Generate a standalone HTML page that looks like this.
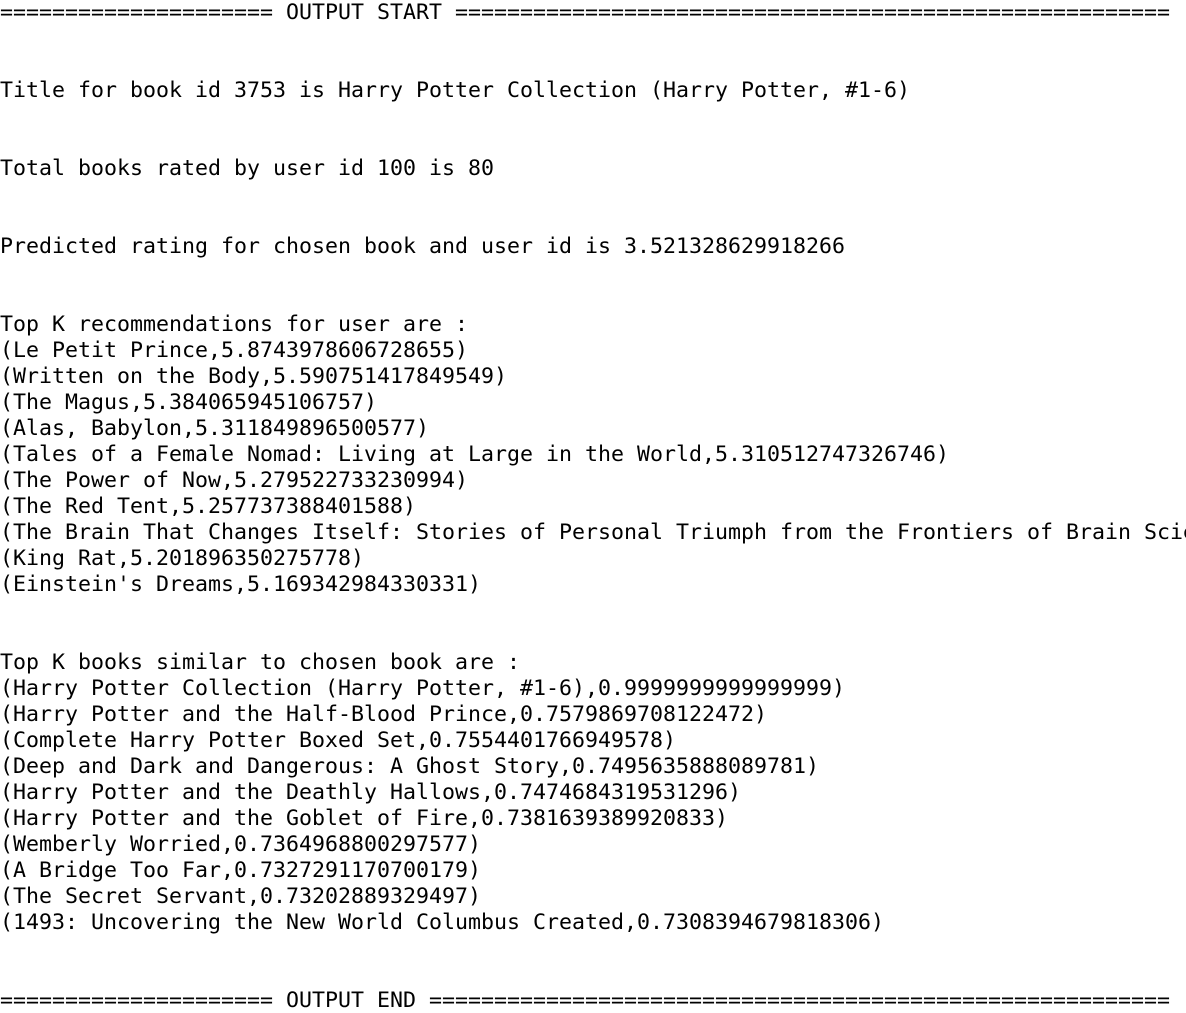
<!DOCTYPE html>
<html><head><meta charset="utf-8"><style>
html,body{margin:0;padding:0;background:#fff;width:1186px;height:1013px;overflow:hidden}
pre{margin:0;font-family:"DejaVu Sans Mono","Liberation Mono",monospace;font-size:21.6px;line-height:26px;color:#000;white-space:pre;overflow:hidden}
</style></head><body><pre>===================== OUTPUT START =======================================================


Title for book id 3753 is Harry Potter Collection (Harry Potter, #1-6)


Total books rated by user id 100 is 80


Predicted rating for chosen book and user id is 3.521328629918266


Top K recommendations for user are :
(Le Petit Prince,5.8743978606728655)
(Written on the Body,5.590751417849549)
(The Magus,5.384065945106757)
(Alas, Babylon,5.311849896500577)
(Tales of a Female Nomad: Living at Large in the World,5.310512747326746)
(The Power of Now,5.279522733230994)
(The Red Tent,5.257737388401588)
(The Brain That Changes Itself: Stories of Personal Triumph from the Frontiers of Brain Science,5.2)
(King Rat,5.201896350275778)
(Einstein's Dreams,5.169342984330331)


Top K books similar to chosen book are :
(Harry Potter Collection (Harry Potter, #1-6),0.9999999999999999)
(Harry Potter and the Half-Blood Prince,0.7579869708122472)
(Complete Harry Potter Boxed Set,0.7554401766949578)
(Deep and Dark and Dangerous: A Ghost Story,0.7495635888089781)
(Harry Potter and the Deathly Hallows,0.7474684319531296)
(Harry Potter and the Goblet of Fire,0.7381639389920833)
(Wemberly Worried,0.7364968800297577)
(A Bridge Too Far,0.7327291170700179)
(The Secret Servant,0.73202889329497)
(1493: Uncovering the New World Columbus Created,0.7308394679818306)


===================== OUTPUT END =========================================================</pre></body></html>
